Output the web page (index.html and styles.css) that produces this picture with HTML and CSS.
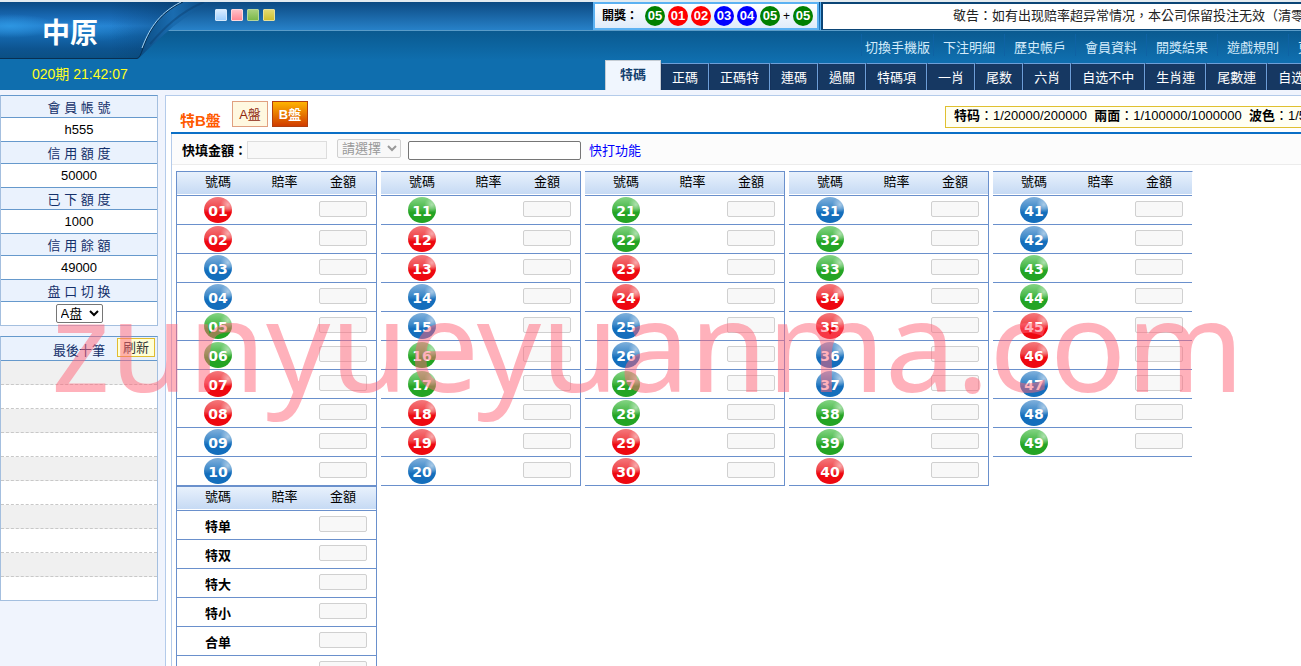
FILE: index.html
```
<!DOCTYPE html>
<html lang="zh-Hant">
<head>
<meta charset="utf-8">
<title>中原</title>
<link rel="stylesheet" href="styles.css">
</head>
<body>
<header class="header">
  <div class="brand">
    <svg class="brand-art" width="216" height="60" viewBox="0 0 216 60" aria-hidden="true">
      <defs>
        <linearGradient id="sheen" x1="0" y1="0" x2="0" y2="1">
          <stop offset="0" stop-color="#0b4a84"/>
          <stop offset=".25" stop-color="#1868b2"/>
          <stop offset=".42" stop-color="#2480cf"/>
          <stop offset=".6" stop-color="#1467ad"/>
          <stop offset=".82" stop-color="#0d5490"/>
          <stop offset="1" stop-color="#0b4f82"/>
        </linearGradient>
        <radialGradient id="glow">
          <stop offset="0" stop-color="#2f9be6" stop-opacity=".8"/>
          <stop offset="1" stop-color="#2f9be6" stop-opacity="0"/>
        </radialGradient>
        <linearGradient id="shade" x1="0" y1="0" x2="1" y2="0">
          <stop offset=".6" stop-color="#063a68" stop-opacity="0"/>
          <stop offset="1" stop-color="#063a68" stop-opacity=".5"/>
        </linearGradient>
        <linearGradient id="fold" x1="0" y1="0" x2="1" y2="0">
          <stop offset="0" stop-color="#0a4a80"/>
          <stop offset=".45" stop-color="#1a6cb0"/>
          <stop offset="1" stop-color="#0d4c84" stop-opacity=".1"/>
        </linearGradient>
      </defs>
      <path d="M183 0H216C190 8 168 28 138 57C146 30 158 12 183 0Z" fill="url(#fold)"/>
      <path d="M0 0H183C158 12 149 30 143 46Q140 56 137 57H0Z" fill="url(#sheen)"/>
      <ellipse cx="10" cy="24" rx="46" ry="12" fill="url(#glow)"/>
      <ellipse cx="90" cy="28" rx="46" ry="12" fill="url(#glow)" opacity=".4"/>
      <path d="M0 0H183C158 12 149 30 143 46Q140 56 137 57H0Z" fill="url(#shade)"/>
      <path d="M0 56.500H137Q140 56 143 46C149 30 158 12 183 0" fill="none" stroke="#082f52"/>
      <path d="M142 46C148 30 157 12 181 0" fill="none" stroke="#a4d4f4"/>
      <path d="M150 42C164 26 180 10 204 0" fill="none" stroke="#0a3a68" stroke-opacity=".4" stroke-width="2"/>
    </svg>
    <h1 class="brand-name">中原</h1>
    <p class="clock">020期 21:42:07</p>
  </div>
  <div class="bars">
    <div class="topbar">
      <div class="skins">
        <button class="skin skin-blue" aria-label="藍"></button>
        <button class="skin skin-pink" aria-label="粉"></button>
        <button class="skin skin-green" aria-label="綠"></button>
        <button class="skin skin-yellow" aria-label="黃"></button>
      </div>
      <div class="draw">
        <b class="draw-label">開獎：</b>
        <span class="dot dot-green">05</span><span class="dot dot-red">01</span><span class="dot dot-red">02</span><span class="dot dot-blue">03</span><span class="dot dot-blue">04</span><span class="dot dot-green">05</span><span class="plus">+</span><span class="dot dot-green">05</span>
      </div>
      <div class="notice">敬告：如有出现赔率超异常情况，本公司保留投注无效（清零</div>
    </div>
    <nav class="links">
      <a class="wide" href="#">切換手機版</a><a href="#">下注明細</a><a href="#">歷史帳戶</a><a href="#">會員資料</a><a href="#">開獎結果</a><a href="#">遊戲規則</a><a href="#">更</a>
    </nav>
    <nav class="tabs">
      <a class="active" href="#">特碼</a><a href="#">正碼</a><a href="#">正碼特</a><a href="#">連碼</a><a href="#">過關</a><a href="#">特碼項</a><a href="#">一肖</a><a href="#">尾数</a><a href="#">六肖</a><a href="#">自选不中</a><a href="#">生肖連</a><a href="#">尾數連</a><a href="#">自选</a>
    </nav>
  </div>
</header>
<div class="page">
  <aside class="side">
    <dl class="account">
      <dt>會 員 帳 號</dt><dd>h555</dd>
      <dt>信 用 額 度</dt><dd>50000</dd>
      <dt>已 下 額 度</dt><dd>1000</dd>
      <dt>信 用 餘 額</dt><dd>49000</dd>
      <dt><label for="plate">盘 口 切 换</label></dt>
      <dd><select id="plate" class="plate"><option>A盘</option></select></dd>
    </dl>
    <section class="recent">
      <div class="recent-head"><h2>最後十筆</h2><button class="refresh">刷新</button></div>
      <ul class="recent-list"><li></li><li></li><li></li><li></li><li></li><li></li><li></li><li></li><li></li><li></li></ul>
    </section>
  </aside>
  <main class="main">
    <div class="title-row">
      <h2 class="title">特B盤</h2>
      <button class="plate-btn">A盤</button>
      <button class="plate-btn current">B盤</button>
      <p class="limits"><b>特码</b>：1/20000/200000 &nbsp;<b>兩面</b>：1/100000/1000000 &nbsp;<b>波色</b>：1/5</p>
    </div>
    <div class="content">
      <div class="quick">
        <label for="amount">快填金額：</label>
        <input id="amount" class="amount" type="text" disabled>
        <select class="pick" aria-label="請選擇" disabled><option>請選擇</option></select>
        <input class="fast" type="text" aria-label="快打功能">
        <a href="#">快打功能</a>
      </div>
      <div id="boards" class="boards"></div>
    </div>
  </main>
</div>
<div class="watermark" aria-hidden="true">zunyueyuanma.com</div>
<script src="script.js"></script>
</body>
</html>
```
FILE: script.js
```
const RED = [1, 2, 7, 8, 12, 13, 18, 19, 23, 24, 29, 30, 34, 35, 40, 45, 46];
const BLUE = [3, 4, 9, 10, 14, 15, 20, 25, 26, 31, 36, 37, 41, 42, 47, 48];

function ball(n) {
  const colour = RED.includes(n) ? "red" : BLUE.includes(n) ? "blue" : "green";
  return `<span class="ball ball-${colour}">${String(n).padStart(2, "0")}</span>`;
}

function board(items) {
  const rows = items.map(([name, html]) =>
    `<tr><td>${html}</td><td></td><td><input class="stake" type="text" aria-label="${name} 金額" disabled></td></tr>`);
  return `<table class="board">
    <colgroup><col class="c-num"><col class="c-odds"><col class="c-stake"></colgroup>
    <thead><tr><th>號碼</th><th>賠率</th><th>金額</th></tr></thead>
    <tbody>${rows.join("")}</tbody></table>`;
}

const groups = [];
for (let start = 1; start <= 49; start += 10) {
  const items = [];
  for (let n = start; n < start + 10 && n <= 49; n++) items.push([n, ball(n)]);
  groups.push(board(items));
}

const sides = ["特单", "特双", "特大", "特小", "合单", ""].map(t => [t, `<b class="side-name">${t}</b>`]);
groups.push(board(sides));
document.getElementById("boards").innerHTML = groups.join("");
```
FILE: styles.css
```
* { box-sizing: border-box; }
body {
  margin: 0;
  height: 100vh;
  overflow: hidden;
  display: flex;
  flex-direction: column;
  position: relative;
  background: #f0f4fd;
  color: #000;
  font: 13px/16px "Liberation Sans", "Noto Sans CJK TC", sans-serif;
}
h1, h2, p, dl, dd, ul { margin: 0; padding: 0; }
a { text-decoration: none; }
button, input, select { font: inherit; margin: 0; }

.header {
  flex: none;
  display: flex;
  position: relative;
  border-top: 2px solid #e4ebf0;
  background:
    linear-gradient(#0c4a82, #2781c8) 0 0 / 100% 28px no-repeat,
    linear-gradient(#5a9cc8, #5a9cc8) 0 28px / 100% 1px no-repeat,
    linear-gradient(#0a5a90 29px, #0f6eae 58px);
}
.brand { flex: 0 0 215px; height: 88px; display: flex; flex-direction: column; }
.brand-art { position: absolute; left: 0; top: 0; }
.brand-name { position: relative; padding: 15px 0 0 42px; color: #fff; font-size: 28px; line-height: 34px; }
.clock { padding: 15px 0 0 32px; color: #ff2; font-size: 14px; }
.bars { flex: 1; min-width: 0; position: relative; }
.topbar { display: flex; height: 28px; overflow: hidden; }
.skins { flex: 0 0 378px; display: flex; gap: 4px; padding-top: 7px; }
.skin { width: 12px; height: 12px; padding: 0; border: 1px solid #d5e8fa; border-radius: 1px; }
.skin-blue { background: linear-gradient(#d8ecff, #9fd0ff); }
.skin-pink { background: linear-gradient(#ffc0c8, #ff8894); border-color: #ffd8dc; }
.skin-green { background: linear-gradient(#a9d07c, #7cb84a); border-color: #b5d69a; }
.skin-yellow { background: linear-gradient(#e3da70, #cfc030); border-color: #e8e09a; }
.draw {
  flex: none;
  width: 226px;
  display: flex;
  align-items: center;
  gap: 3px;
  padding-left: 7px;
  border: 2px solid #5cb2f2;
  background: linear-gradient(#fff, #dfecfa);
  font-size: 12px;
}
.draw-label { flex: 0 0 40px; white-space: nowrap; }
.dot { width: 20px; height: 20px; border-radius: 50%; color: #fff; font-weight: bold; font-size: 13px; line-height: 20px; text-align: center; }
.dot-green { background: #008000; }
.dot-red { background: #f00; }
.dot-blue { background: #00f; }
.plus { flex: 0 0 7px; line-height: 20px; }
.notice {
  flex: 1;
  min-width: 0;
  margin-left: 2px;
  padding: 4px 0 0 130px;
  overflow: hidden;
  white-space: nowrap;
  border: solid #0b4576;
  border-width: 2px 0 1px 2px;
  box-shadow: 0 0 0 1px #5cb2f2;
  background: #fff;
  color: #222;
}
.links { display: flex; padding: 4px 0 0 646px; overflow: hidden; white-space: nowrap; }
.links a { flex: none; padding: 6px 9px 0; height: 22px; border-left: 1px solid #0e62a4; color: #d3ebfb; }
.links .wide { padding: 6px 3px 0; }
.tabs { display: flex; align-items: flex-end; margin-top: 4px; padding-left: 390px; height: 30px; overflow: hidden; white-space: nowrap; }
.tabs a { flex: none; height: 27px; padding: 6px 10px 0; border: 1px solid #6d9fd8; border-width: 1px 1px 0 0; border-left: 1px solid #14325c; background: #163862; color: #fff; }
.tabs .active { height: 30px; padding: 6px 14px 0; border-color: #c4ccd4; background: #f0f6fe; color: #14406e; font-weight: bold; }

.page { flex: 1; min-height: 0; display: flex; gap: 7px; padding-top: 5px; }
.side { flex: 0 0 158px; text-align: center; }
.account { border: 1px solid #a4bfdf; border-top-color: #6699cc; }
.account dt { height: 22px; padding-top: 4px; border-bottom: 1px solid #6699cc; background: #eaf2fd; color: #14306a; }
.account dd { height: 24px; padding-top: 4px; border-bottom: 1px solid #6699cc; background: #fff; }
.account dd:last-child { height: 23px; padding-top: 2px; border-bottom: 0; }
.plate { height: 19px; width: 47px; border: 1px solid #767676; border-radius: 2px; background: #fff; color: #000; vertical-align: top; }
.recent { margin-top: 10px; border: 1px solid #a4bfdf; border-top-color: #6699cc; }
.recent-head { display: flex; justify-content: flex-end; gap: 12px; height: 24px; padding: 1px 2px; border-bottom: 1px solid #6699cc; background: #eaf2fd; }
.recent-head h2 { padding-top: 5px; font-size: 13px; font-weight: normal; color: #14306a; }
.refresh { width: 38px; height: 19px; padding: 0; border: 1px solid #e0bc30; background: #ffffd8; color: #333; line-height: 16px; }
.recent-list { list-style: none; }
.recent-list li { height: 24px; border-bottom: 1px dashed #c8c8c8; background: #fff; }
.recent-list li:nth-child(odd) { background: #f0f0f0; }
.recent-list li:last-child { height: 23px; border-bottom: 0; }

.main { flex: 1; min-width: 0; padding-left: 5px; overflow: hidden; border: 1px solid #b4cbea; border-width: 1px 0 0 1px; background: #fff; }
.title-row { display: flex; align-items: flex-start; gap: 4px; height: 38px; padding: 5px 0 0 9px; overflow: hidden; border-bottom: 2px solid #0a6fc6; white-space: nowrap; }
.title { flex: 0 0 48px; padding-top: 12px; color: #ff5a00; font-size: 15px; }
.plate-btn { flex: none; width: 36px; height: 26px; padding: 2px 0 0; border: 1px solid #e0a080; background: #fff8e0; color: #902810; }
.plate-btn.current { border-color: #b04010; background: linear-gradient(#ffb400, #d03c00); color: #fff; font-weight: bold; }
.limits { flex: 0 0 auto; margin: 5px 0 0 633px; height: 22px; padding: 1px 0 0 8px; border: 1px solid #e0c030; background: #fffff2; }
.content { border-left: 1px solid #b4cbea; }
.quick { display: flex; height: 31px; padding: 5px 0 0 10px; border-bottom: 1px solid #ececec; background: #fcfcfc; line-height: 24px; white-space: nowrap; }
.quick label { flex: 0 0 65px; font-weight: bold; }
.quick a { margin-left: 8px; color: #00f; }
.amount { width: 80px; height: 18px; margin-top: 2px; border: 1px solid #ddd; background: #f8f8f8; }
.pick { width: 64px; height: 19px; margin-left: 10px; border: 1px solid #d0d0d0; border-radius: 2px; background: #f8f8f8; color: #999; opacity: 1; }
.fast { width: 173px; height: 19px; margin: 2px 0 0 7px; border: 1px solid #767676; border-radius: 2px; background: #fff; }

.boards { display: grid; grid-template-columns: 201px repeat(4, 200px); column-gap: 4px; align-items: start; padding: 6px 0 0 4px; }
.board { width: 100%; table-layout: fixed; border-spacing: 0; border-top: 1px solid #6a90cc; border-right: 1px solid #6a90cc; }
.board:nth-child(5n+1) { border-left: 1px solid #6a90cc; }
.board:nth-child(5) { border-right-color: transparent; }
.c-num { width: 82px; }
.c-odds { width: 51px; }
.board th { height: 24px; padding: 0 0 3px; font-weight: normal; border-bottom: 1px solid #6a90cc; background: linear-gradient(#e8f1fc, #c6daf4 22px, #fff 22px); }
.board td { height: 29px; padding: 0; text-align: center; border-bottom: 1px solid #6a90cc; }
.ball { display: block; width: 28px; height: 26px; margin: 0 auto; border-radius: 50%; color: #fff; font: bold 14px/28px "DejaVu Sans", sans-serif; }
.ball-red { background: radial-gradient(circle at 85% 30%, #ffffff80, #fff0 25%), linear-gradient(#f4787c, #f04448 45%, #ee0810 60%); }
.ball-blue { background: radial-gradient(circle at 85% 30%, #ffffff80, #fff0 25%), linear-gradient(#80b0dc, #3c88c8 45%, #146ebc 60%); }
.ball-green { background: radial-gradient(circle at 85% 30%, #ffffff80, #fff0 25%), linear-gradient(#84d484, #48b848 45%, #24a424 60%); }
.stake { display: block; width: 48px; height: 16px; margin: 0 auto 2px; border: 1px solid #d0d0d0; border-radius: 2px; background: #f8f8f8; }
.side-name { display: block; padding-top: 4px; }
.watermark { position: absolute; left: 51px; top: 259px; color: #ff647880; font: 126px/168px "Noto Sans", sans-serif; white-space: nowrap; pointer-events: none; }
```
